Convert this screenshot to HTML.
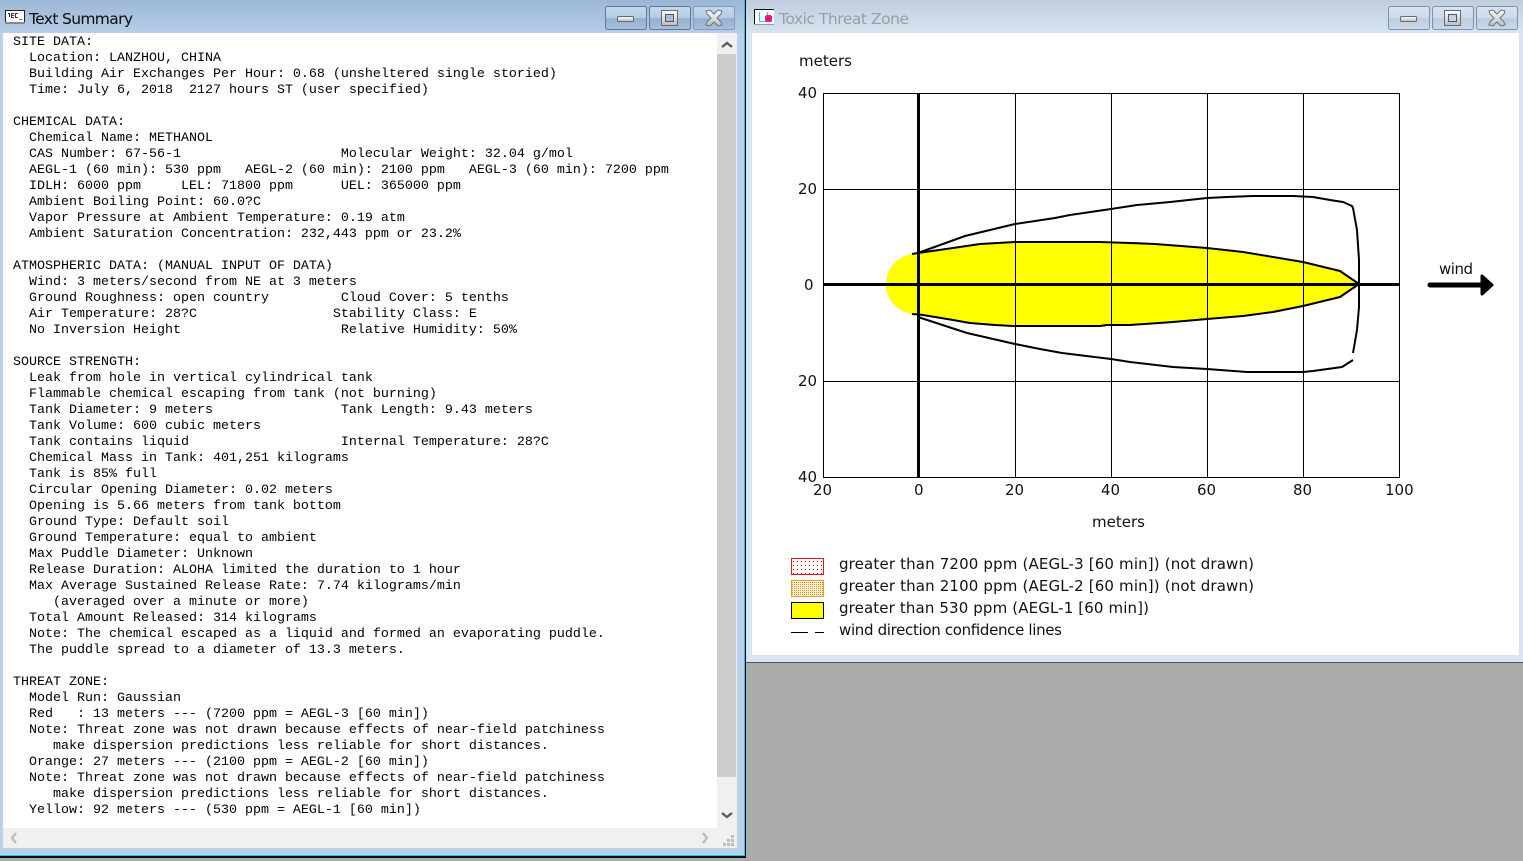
<!DOCTYPE html>
<html><head><meta charset="utf-8"><title>ALOHA</title>
<style>
html,body{margin:0;padding:0;width:1523px;height:861px;overflow:hidden;background:#ababab}
.a{position:absolute}
pre{position:absolute;left:13px;top:35px;margin:0;font:13.33px/16px "Liberation Mono",monospace;color:#000;height:793px;width:700px;overflow:hidden}
svg text{font-family:"DejaVu Sans",sans-serif}
</style></head><body>
<div class="a" style="left:0;top:0;width:745px;height:856px;background:#b9d1ea"></div>
<div class="a" style="left:0;top:0;width:745px;height:33px;background:linear-gradient(#9cb7d5,#b6cee9)"></div>
<div class="a" style="left:744px;top:0;width:1px;height:856px;background:#1fc6e8"></div>
<div class="a" style="left:0;top:855px;width:745px;height:1px;background:#1fc6e8"></div>
<div class="a" style="left:745px;top:0;width:1px;height:858px;background:#000"></div>
<div class="a" style="left:0;top:856px;width:746px;height:2px;background:#111"></div>
<div class="a" style="left:3px;top:33px;width:734px;height:815px;background:#fff"></div>
<div class="a" style="left:717px;top:33px;width:20px;height:795px;background:#f0f0f0"></div>
<div class="a" style="left:717px;top:54px;width:19px;height:723px;background:#cdcdcd"></div>
<div class="a" style="left:3px;top:828px;width:734px;height:20px;background:#f0f0f0"></div>
<div class="a" style="left:746px;top:0;width:777px;height:663px;background:#d7e4f2"></div>
<div class="a" style="left:746px;top:0;width:777px;height:33px;background:linear-gradient(#bfcddc,#d7e4f2)"></div>
<div class="a" style="left:752px;top:33px;width:767px;height:622px;background:#fff"></div>
<div class="a" style="left:746px;top:662px;width:777px;height:1px;background:#555"></div>
<pre>SITE DATA:
  Location: LANZHOU, CHINA
  Building Air Exchanges Per Hour: 0.68 (unsheltered single storied)
  Time: July 6, 2018  2127 hours ST (user specified)

CHEMICAL DATA:
  Chemical Name: METHANOL
  CAS Number: 67-56-1                    Molecular Weight: 32.04 g/mol
  AEGL-1 (60 min): 530 ppm   AEGL-2 (60 min): 2100 ppm   AEGL-3 (60 min): 7200 ppm
  IDLH: 6000 ppm     LEL: 71800 ppm      UEL: 365000 ppm
  Ambient Boiling Point: 60.0?C
  Vapor Pressure at Ambient Temperature: 0.19 atm
  Ambient Saturation Concentration: 232,443 ppm or 23.2%

ATMOSPHERIC DATA: (MANUAL INPUT OF DATA)
  Wind: 3 meters/second from NE at 3 meters
  Ground Roughness: open country         Cloud Cover: 5 tenths
  Air Temperature: 28?C                 Stability Class: E
  No Inversion Height                    Relative Humidity: 50%

SOURCE STRENGTH:
  Leak from hole in vertical cylindrical tank
  Flammable chemical escaping from tank (not burning)
  Tank Diameter: 9 meters                Tank Length: 9.43 meters
  Tank Volume: 600 cubic meters
  Tank contains liquid                   Internal Temperature: 28?C
  Chemical Mass in Tank: 401,251 kilograms
  Tank is 85% full
  Circular Opening Diameter: 0.02 meters
  Opening is 5.66 meters from tank bottom
  Ground Type: Default soil
  Ground Temperature: equal to ambient
  Max Puddle Diameter: Unknown
  Release Duration: ALOHA limited the duration to 1 hour
  Max Average Sustained Release Rate: 7.74 kilograms/min
     (averaged over a minute or more)
  Total Amount Released: 314 kilograms
  Note: The chemical escaped as a liquid and formed an evaporating puddle.
  The puddle spread to a diameter of 13.3 meters.

THREAT ZONE:
  Model Run: Gaussian
  Red   : 13 meters --- (7200 ppm = AEGL-3 [60 min])
  Note: Threat zone was not drawn because effects of near-field patchiness
     make dispersion predictions less reliable for short distances.
  Orange: 27 meters --- (2100 ppm = AEGL-2 [60 min])
  Note: Threat zone was not drawn because effects of near-field patchiness
     make dispersion predictions less reliable for short distances.
  Yellow: 92 meters --- (530 ppm = AEGL-1 [60 min])</pre>
<svg class="a" style="left:0;top:0" width="1523" height="861" viewBox="0 0 1523 861">
<defs>
<pattern id="pr" width="4" height="4" patternUnits="userSpaceOnUse"><rect width="4" height="4" fill="#fff"/><rect x="1" y="1" width="1" height="1" fill="#e00"/></pattern>
<pattern id="po" width="2" height="2" patternUnits="userSpaceOnUse"><rect width="2" height="2" fill="#fff4e0"/><rect width="1" height="1" fill="#ee8a00"/></pattern>
<linearGradient id="bt" x1="0" y1="0" x2="0" y2="1"><stop offset="0" stop-color="#c5d8ec"/><stop offset=".5" stop-color="#b4cbe3"/><stop offset=".52" stop-color="#94afcd"/><stop offset="1" stop-color="#a8c1dc"/></linearGradient>
<linearGradient id="bt2" x1="0" y1="0" x2="0" y2="1"><stop offset="0" stop-color="#d7e3ef"/><stop offset=".5" stop-color="#ccdaea"/><stop offset=".52" stop-color="#bccde0"/><stop offset="1" stop-color="#c8d8ea"/></linearGradient>
<linearGradient id="gl" x1="0" y1="0" x2="0" y2="1"><stop offset="0" stop-color="#fff"/><stop offset="1" stop-color="#bdbdbd"/></linearGradient>
</defs>

<!-- left title -->
<g shape-rendering="crispEdges">
<rect x="5.5" y="10.5" width="19" height="13" fill="#fff" stroke="#222"/>
<rect x="5" y="22" width="20" height="2" fill="#888"/>
<rect x="8" y="13" width="2" height="1" fill="#222"/><rect x="9" y="13" width="1" height="4" fill="#222"/>
<rect x="11" y="13" width="3" height="1" fill="#333"/><rect x="11" y="15" width="3" height="1" fill="#333"/><rect x="11" y="17" width="3" height="1" fill="#333"/><rect x="11" y="13" width="1" height="4" fill="#333"/>
<rect x="15" y="13" width="3" height="1" fill="#333"/><rect x="15" y="13" width="1" height="4" fill="#333"/><rect x="15" y="17" width="3" height="1" fill="#333"/>
<rect x="19" y="19" width="3" height="1" fill="#777"/>
</g>
<text x="29" y="24" font-size="15.5" fill="#0b0b0b" textLength="104" lengthAdjust="spacing">Text Summary</text>

<!-- left buttons -->
<rect x="605.5" y="6.5" width="41" height="23" rx="2" fill="url(#bt)" stroke="#5e7896"/>
<rect x="649.5" y="6.5" width="41" height="23" rx="2" fill="url(#bt)" stroke="#5e7896"/>
<rect x="693.5" y="6.5" width="41" height="23" rx="2" fill="url(#bt)" stroke="#7f9bb9"/>
<rect x="617.5" y="16.5" width="16" height="5" rx="1" fill="url(#gl)" stroke="#5f6b78"/>
<rect x="661.5" y="10.5" width="16" height="15" fill="url(#gl)" stroke="#5f6b78"/>
<rect x="665.5" y="14.5" width="8" height="7" fill="#a8bdd4" stroke="#4a5663"/>
<path d="M706 11l4-1 4 4 4-4 4 1-1 3-4 4 4 4 1 3-4 1-4-4-4 4-4-1 1-3 4-4-4-4z" fill="url(#gl)" stroke="#6a747f" stroke-width="1"/>

<!-- right title -->
<g shape-rendering="crispEdges">
<rect x="754" y="9" width="20" height="16" fill="#fff"/>
<rect x="754" y="9" width="20" height="1" fill="#111"/><rect x="754" y="9" width="1" height="16" fill="#111"/><rect x="754" y="24" width="20" height="1" fill="#999"/>
<rect x="759" y="12" width="1" height="10" fill="#19d3ee"/><rect x="759" y="21" width="13" height="1" fill="#19d3ee"/><rect x="767" y="12" width="1" height="5" fill="#19d3ee"/>
<rect x="765" y="16" width="7" height="5" fill="#f0189a"/><rect x="766" y="15" width="5" height="7" fill="#f0189a"/><rect x="767" y="17" width="3" height="3" fill="#e01060"/>
</g>
<text x="779" y="24" font-size="15.5" fill="#9a9ea3" textLength="130" lengthAdjust="spacing">Toxic Threat Zone</text>

<!-- right buttons -->
<rect x="1388.5" y="6.5" width="41" height="23" rx="2" fill="url(#bt2)" stroke="#7e93ab"/>
<rect x="1432.5" y="6.5" width="41" height="23" rx="2" fill="url(#bt2)" stroke="#7e93ab"/>
<rect x="1476.5" y="6.5" width="41" height="23" rx="2" fill="url(#bt2)" stroke="#7e93ab"/>
<rect x="1400.5" y="16.5" width="16" height="5" rx="1" fill="url(#gl)" stroke="#5f6b78"/>
<rect x="1444.5" y="10.5" width="16" height="15" fill="url(#gl)" stroke="#5f6b78"/>
<rect x="1448.5" y="14.5" width="8" height="7" fill="#c4d3e4" stroke="#4a5663"/>
<path d="M1489 11l4-1 4 4 4-4 4 1-1 3-4 4 4 4 1 3-4 1-4-4-4 4-4-1 1-3 4-4-4-4z" fill="url(#gl)" stroke="#6a747f" stroke-width="1"/>

<!-- scroll arrows -->
<path d="M722 47l5-4 5 4" fill="none" stroke="#5a5a5a" stroke-width="2.4"/>
<path d="M722 813l5 4 5-4" fill="none" stroke="#5a5a5a" stroke-width="2.4"/>
<path d="M16 833l-4 5 4 5" fill="none" stroke="#bdbdbd" stroke-width="2.4"/>
<path d="M703 833l4 5-4 5" fill="none" stroke="#bdbdbd" stroke-width="2.4"/>
<g fill="#bcbcbc" shape-rendering="crispEdges">
<rect x="731" y="835" width="3" height="3"/><rect x="727" y="839" width="3" height="3"/><rect x="731" y="839" width="3" height="3"/><rect x="723" y="843" width="3" height="3"/><rect x="727" y="843" width="3" height="3"/><rect x="731" y="843" width="3" height="3"/>
</g>

<!-- plot -->
<path d="M912 254L918 253L953 248L980 244L1015 242L1100 242L1130 243L1155 244L1207 248L1243 252L1273 257L1303 262L1340 271L1359 284L1340 297L1303 306L1273 312L1243 316L1207 319L1173 322L1130 325L1107 325L1100 326L1013 326L995 325L970 323L953 320L923 315L912 314C896 311 886 299 886 285C886 269 896 257 912 254Z" fill="#ffff00"/>
<g shape-rendering="crispEdges" fill="#000">
<rect x="823" y="93" width="577" height="1"/><rect x="823" y="189" width="577" height="1"/><rect x="823" y="381" width="577" height="1"/><rect x="823" y="477" width="577" height="1"/>
<rect x="823" y="93" width="1" height="385"/><rect x="1015" y="93" width="1" height="385"/><rect x="1111" y="93" width="1" height="385"/><rect x="1207" y="93" width="1" height="385"/><rect x="1303" y="93" width="1" height="385"/><rect x="1399" y="93" width="1" height="385"/>
<rect x="917" y="93" width="3" height="385"/>
<rect x="823" y="283" width="577" height="3"/>
</g>
<g fill="none" stroke="#000" stroke-width="2" stroke-linejoin="round">
<path d="M912 254L918 253L953 248L980 244L1015 242L1100 242L1130 243L1155 244L1207 248L1243 252L1273 257L1303 262L1340 271L1359 284L1340 297L1303 306L1273 312L1243 316L1207 319L1173 322L1130 325L1107 325L1100 326L1013 326L995 325L970 323L953 320L923 315L912 314"/>
<path d="M918 253L965 236L1015 224L1055 218L1070 215L1111 209L1137 205L1170 202L1207 198L1227 197L1253 196L1293 196L1313 197L1330 200L1343 202L1352 206L1353 208L1357 230L1359 260L1359 284L1359 307L1357 330L1353 353"/>
<path d="M1353 360L1342 367L1313 371L1303 372L1247 372L1207 369L1173 367L1130 362L1111 359L1062 353L1040 349L1015 344L967 333L918 317"/>
</g>

<!-- arrow -->
<path d="M1430 285H1484" stroke="#000" stroke-width="5" stroke-linecap="round"/>
<path d="M1482 276L1492 285L1482 294Z" fill="#000" stroke="#000" stroke-width="3" stroke-linejoin="round"/>

<!-- labels -->
<g font-size="15" fill="#111">
<text x="799" y="66" textLength="53" lengthAdjust="spacing">meters</text>
<text x="1439" y="274" textLength="34" lengthAdjust="spacing">wind</text>
<text x="798" y="98">40</text>
<text x="798" y="194">20</text>
<text x="804" y="290">0</text>
<text x="798" y="386">20</text>
<text x="798" y="482">40</text>
<text x="813" y="495">20</text>
<text x="914" y="495">0</text>
<text x="1005" y="495">20</text>
<text x="1101" y="495">40</text>
<text x="1197" y="495">60</text>
<text x="1293" y="495">80</text>
<text x="1385" y="495">100</text>
<text x="1092" y="527" textLength="53" lengthAdjust="spacing">meters</text>
<text x="839" y="569" textLength="415" lengthAdjust="spacing">greater than 7200 ppm (AEGL-3 [60 min]) (not drawn)</text>
<text x="839" y="591" textLength="415" lengthAdjust="spacing">greater than 2100 ppm (AEGL-2 [60 min]) (not drawn)</text>
<text x="839" y="613" textLength="310" lengthAdjust="spacing">greater than 530 ppm (AEGL-1 [60 min])</text>
<text x="839" y="635" textLength="223" lengthAdjust="spacing">wind direction confidence lines</text>
</g>

<!-- legend -->
<g shape-rendering="crispEdges">
<rect x="791.5" y="558.5" width="32" height="16" fill="url(#pr)" stroke="#e8141c"/>
<rect x="791.5" y="580.5" width="32" height="16" fill="url(#po)" stroke="#f09a20"/>
<rect x="791.5" y="602.5" width="32" height="16" fill="#ffff00" stroke="#000"/>
<rect x="791" y="632" width="17" height="1" fill="#000"/>
<rect x="815" y="632" width="9" height="1" fill="#000"/>
</g>
</svg>
</body></html>
